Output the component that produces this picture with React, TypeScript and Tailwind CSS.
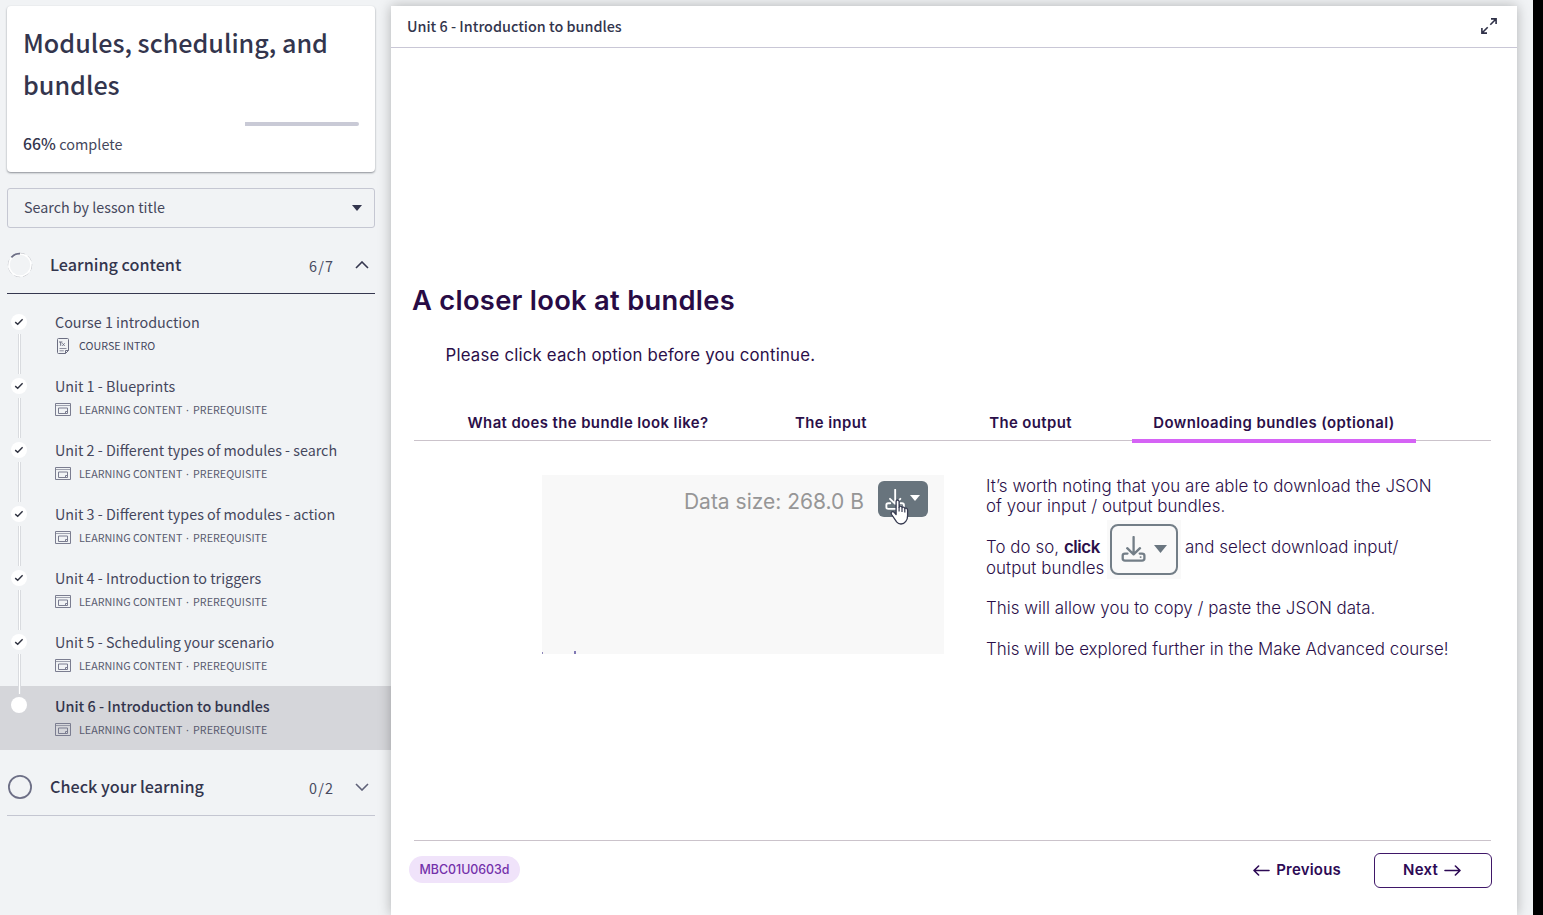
import React from "react";

const lessons = [
  { title: "Course 1 introduction", kind: "intro" },
  { title: "Unit 1 - Blueprints", kind: "unit" },
  { title: "Unit 2 - Different types of modules - search", kind: "unit" },
  { title: "Unit 3 - Different types of modules - action", kind: "unit" },
  { title: "Unit 4 - Introduction to triggers", kind: "unit" },
  { title: "Unit 5 - Scheduling your scenario", kind: "unit" },
  { title: "Unit 6 - Introduction to bundles", kind: "unit", active: true },
];

function Check() {
  return (
    <svg width="16" height="16" viewBox="0 0 16 16" fill="none" className="block">
      <path d="M4.2 8.1 L6.7 10.2 L11.6 5.2" stroke="#2f3240" strokeWidth="1.4" />
    </svg>
  );
}

function WindowIcon() {
  return (
    <svg width="16" height="14" viewBox="0 0 16 14" fill="none" stroke="#7b7d90" className="mb-[2px] block">
      <path d="M0.5 1.5H15.5V13.5H0.5Z" />
      <path d="M0.5 3.5H15.5" strokeOpacity=".7" />
      <path d="M3.5 6H12.5V11.5H3.5Z" />
      <path d="M12.5 9.5H10.5V11.5" />
    </svg>
  );
}

function DocIcon() {
  return (
    <svg width="16" height="16" viewBox="0 0 16 16" fill="none" stroke="#6c6e82" className="block">
      <path d="M3.5 .5H12.5Q13.5 .5 13.5 1.5V12.5L10.5 15.5H3.5Q2.5 15.5 2.5 14.5V1.5Q2.5 .5 3.5 .5Z" />
      <path d="M13.5 12.5H10.5V15.5" />
      <path d="M4 4H7.4M5.7 4V7.8M7.4 5.3L9.6 7.8M9.6 5.3L7.4 7.8" />
      <path d="M4.5 10.5H11.5M4.5 12.8H8.8" strokeOpacity=".75" />
    </svg>
  );
}

function DownloadIcon({ className, width }: { className?: string; width: number }) {
  return (
    <svg width={width} height={width} viewBox="0 0 26 26" fill="none" stroke="currentColor" strokeWidth="2.3" strokeLinecap="round" strokeLinejoin="round" className={className}>
      <path d="M12.6 1V18M6.2 12.2L12.6 18.4L19 12.2" />
      <path d="M6.5 17.6H4Q1.7 17.6 1.7 19.6V22.6Q1.7 24.6 4 24.6H21Q23.4 24.6 23.4 22.6V19.6Q23.4 17.6 21 17.6H18.7" />
      <path d="M19.6 21.1h.1" strokeWidth="1.9" />
    </svg>
  );
}

function SectionHeader({ label, count, open }: { label: string; count: string; open?: boolean }) {
  return (
    <div className={open ? "flex h-[58px] items-center border-b border-[#35374f]" : "flex h-[58px] items-center border-b border-[#c4c6d1]"}>
      <svg width="26" height="26" viewBox="0 0 26 26" fill="none" className="shrink-0">
        {open ? (
          <>
            <circle cx="13" cy="13" r="11.7" stroke="#b9bbc1" strokeWidth="1" strokeDasharray="6 3" />
            <circle cx="13" cy="13" r="11" stroke="#ffffff" strokeWidth="1.5" />
            <path d="M4.4 5.4A11.4 11.4 0 0 1 13 1.7" stroke="#6d6f86" strokeWidth="1.8" />
          </>
        ) : (
          <circle cx="13" cy="13" r="11.1" stroke="#6d6f86" strokeWidth="1.8" />
        )}
      </svg>
      <span className="ml-[17px] text-[16.2px] font-medium">{label}</span>
      <span className="ml-auto pt-[2px] text-[14.4px] tracking-[1.1px] text-[#484a60]">{count}</span>
      <svg width="14" height="8" viewBox="0 0 14 8" fill="none" className="mr-[6px] ml-[21px]">
        <path d={open ? "M1 7L7 1L13 7" : "M1 1L7 7L13 1"} stroke={open ? "#35374f" : "#5f6178"} strokeWidth="1.6" />
      </svg>
    </div>
  );
}

function Lesson({ title, kind, active, last }: { title: string; kind: string; active?: boolean; last?: boolean }) {
  return (
    <li className={active ? "flex h-16 bg-[#d5d6da]" : "flex h-16"}>
      <div className="flex w-[55px] shrink-0 flex-col items-start pl-[11px]">
        <div className={active ? "mt-[11px] size-4 rounded-full bg-white" : "mt-[12px] size-4 rounded-full bg-white"}>
          {!active && <Check />}
        </div>
        {!last && <div className="relative mt-1 ml-[7px] h-10 w-[3px] shrink-0 border-x border-[#d9dbdf] bg-white" />}
      </div>
      <div className="flex flex-col pt-[10px]">
        <div className={active ? "h-5 text-[14.37px] leading-5 font-medium" : "h-5 text-[14.33px] leading-5 text-[#45475d]"}>{title}</div>
        <div className="mt-[6px] flex h-4 items-center text-[10.7px] leading-4 tracking-[0.04px] text-[#585a6f]">
          {kind === "intro" ? <DocIcon /> : <WindowIcon />}
          {kind === "intro" ? (
            <span className="ml-2 text-[#45475d]">COURSE INTRO</span>
          ) : (
            <>
              <span className="ml-2 w-[107px]">LEARNING CONTENT</span>
              <span className="w-[7px] font-['Noto_Sans']">·</span>
              <span>PREREQUISITE</span>
            </>
          )}
        </div>
      </div>
    </li>
  );
}

function Sidebar() {
  return (
    <aside className="flex w-[391px] shrink-0 flex-col pt-[6px] font-['Noto_Sans_CJK_SC',sans-serif] text-[#33354d]">
      <div className="mr-4 ml-[7px] h-[166px] rounded-[4px] bg-white px-4 pt-[15px] shadow-[0_1px_2px_rgba(40,45,55,0.5)]">
        <h1 className="text-[25.13px] leading-[42px] font-medium">Modules, scheduling, and bundles</h1>
        <div className="mt-[17px] flex h-1 justify-end">
          <div className="h-1 w-[114px] rounded-r-[2px] bg-[#c9cad6]" />
        </div>
        <div className="mt-[6px] text-[14.4px] leading-6 text-[#45475c]">
          <span className="text-[15.8px] font-medium text-[#33354d]">66%</span><span className="tracking-[0.06px]"> complete</span>
        </div>
      </div>
      <div className="mt-4 mr-4 ml-[7px] flex h-10 items-center justify-between rounded-[3px] border border-[#c5c7d2] pr-3 pl-4 text-[14.3px] text-[#45475c]">
        <span className="pb-[2px]">Search by lesson title</span>
        <svg width="10" height="6" viewBox="0 0 10 6"><path d="M0 0H10L5 6Z" fill="#33354d" /></svg>
      </div>
      <div className="mt-[8px] mr-4 ml-[7px]">
        <SectionHeader label="Learning content" count="6/7" open />
      </div>
      <ul className="mt-2">
        {lessons.map((l, i) => (
          <Lesson key={l.title} {...l} last={i === lessons.length - 1} />
        ))}
      </ul>
      <div className="mt-[8px] mr-4 ml-[7px]">
        <SectionHeader label="Check your learning" count="0/2" />
      </div>
    </aside>
  );
}

const tabs = [
  { label: "What does the bundle look like?", box: "w-[290px]" },
  { label: "The input", box: "w-[196px]" },
  { label: "The output", box: "w-[203px]" },
  { label: "Downloading bundles (optional)", box: "w-[284px]" },
];

function Recording() {
  return (
    <div className="flex h-[179px] w-[402px] shrink-0 flex-col justify-between bg-[#f8f8f8]">
      <div className="flex items-start justify-end pt-[6px] pr-4">
        <span className="mt-[6px] mr-[14px] text-[21px] leading-[30px] text-[#969696]">Data size: 268.0 B</span>
        <div className="relative flex h-9 w-[50px] rounded-[6px] bg-[#68747d] pt-[8px] pl-[7px] text-white">
          <DownloadIcon width={21} />
          <svg width="10" height="6" viewBox="0 0 10 6" className="mt-[6px] ml-[4px]"><path d="M0 0H10L5 6Z" fill="white" /></svg>
          <svg width="20" height="26" viewBox="0 0 20 26" className="absolute top-[18px] left-[12px]">
            <path
              d="M6.1 2.8Q6.1 1 7.6 1T9.1 2.8V8.2Q9.4 7.2 10.6 7.2T12 8.7Q12.4 8 13.4 8.1T14.8 9.6Q15.3 9 16.3 9.2T17.6 11V16.5Q17.6 20.5 15.8 22.4Q14 25 11 25Q8.3 25 6.6 22.8L1.6 15.5Q.6 13.8 1.7 13T4.2 13.3L6.1 15.5Z"
              fill="white" stroke="#363a50" strokeWidth="1.3" strokeLinejoin="round"
            />
            <path d="M9.1 8V12.5M12 9V13M14.8 10V13.4" stroke="#363a50" strokeWidth="1.2" />
          </svg>
        </div>
      </div>
      <div className="flex h-[3px] items-end">
        <div className="h-[2px] w-px bg-[#8d86b8]" />
        <div className="ml-[31px] h-[3px] w-[2px] bg-[#8078b4]" />
      </div>
    </div>
  );
}

function Arrow({ back }: { back?: boolean }) {
  return (
    <svg width="17" height="11" viewBox="0 0 17 11" fill="none" stroke="#2d0a55" strokeWidth="1.6" strokeLinecap="round" strokeLinejoin="round">
      <path d={back ? "M16 5.5H1M5.6 1L1 5.5L5.6 10" : "M1 5.5H16M11.4 1L16 5.5L11.4 10"} />
    </svg>
  );
}

function Slide() {
  return (
    <section className="flex flex-1 flex-col font-[Inter,sans-serif] text-[#2b0f49]">
      <h2 className="mt-[233px] ml-[21px] text-[27.3px] leading-[40px] font-semibold tracking-[0.29px] text-[#280b45]">A closer look at bundles</h2>
      <p className="mt-[24px] ml-[54.5px] text-[16.8px] leading-5 tracking-[0.2px]">Please click each option before you continue.</p>
      <nav className="mt-[37px] mr-[26px] ml-[23px] flex h-[39px] border-b border-[#cbc3cb] pl-[29px]">
        {tabs.map((t, i) => (
          <div key={t.label} className={`flex h-[41px] shrink-0 justify-center pt-[11px] text-[14.9px] leading-[20px] font-semibold tracking-[0.41px] whitespace-nowrap ${t.box} ${i === 3 ? "border-b-4 border-[#d563f5]" : ""}`}>
            {t.label}
          </div>
        ))}
      </nav>
      <div className="mt-[34px] flex pl-[151px]">
        <Recording />
        <div className="ml-[42px] pt-[1px] text-[16.9px] leading-[20.4px] font-light whitespace-nowrap">
          <p className="tracking-[0.07px]">It’s worth noting that you are able to download the JSON<br />of your input / output bundles.</p>
          <div className="mt-[3px] flex h-[60px]">
            <p className="w-[121px] shrink-0 pt-[17px] leading-[20.8px] tracking-[0.05px]">To do so, <b className="font-semibold tracking-[-0.4px]">click</b><br />output bundles</p>
            <div className="flex h-[59px] w-[74px] shrink-0 items-center justify-center bg-[#f9f9f9]">
              <div className="flex h-[51px] w-[68px] rounded-[8px] border-2 border-[#737e87] pt-[10px] pl-[9px] text-[#737e87]">
                <DownloadIcon width={26} />
                <svg width="13" height="8" viewBox="0 0 13 8" className="mt-[9px] ml-[7px]"><path d="M0 0H13L6.5 8Z" fill="#6a7680" /></svg>
              </div>
            </div>
            <p className="ml-[4px] pt-[17px] tracking-[0.04px]">and select download input/</p>
          </div>
          <p className="mt-[18px] tracking-[0.03px]">This will allow you to copy / paste the JSON data.</p>
          <p className="mt-[21px]">This will be explored further in the Make Advanced course!</p>
        </div>
      </div>
      <footer className="mt-auto mr-[25px] mb-[27px] ml-[18px] flex h-[48px] flex-col">
        <div className="mr-px ml-[5px] h-px shrink-0 bg-[#cbc3cb]" />
        <div className="mt-3 flex h-[35px] items-start">
          <span className="mt-[3px] flex h-[27px] w-[111px] items-center justify-center rounded-full bg-[#f0e3fa] pt-px text-[12.4px] font-medium text-[#7431aa]">MBC01U0603d</span>
          <button className="ml-auto flex h-[34px] items-center gap-[6px] text-[15px] font-semibold tracking-[0.2px] text-[#2d0a55]"><Arrow back />Previous</button>
          <button className="ml-[33px] flex h-[35px] w-[118px] items-center justify-center gap-[6px] rounded-[6px] border border-[#3f1768] pr-[2px] text-[15px] font-semibold tracking-[0.2px] text-[#2d0a55]">Next<Arrow /></button>
        </div>
      </footer>
    </section>
  );
}

export default function App() {
  return (
    <div className="flex h-[915px] w-[1543px] overflow-hidden bg-[#f1f3f5]">
      <Sidebar />
      <main className="relative mt-[6px] flex w-[1126px] shrink-0 flex-col bg-white shadow-[0_0_12px_rgba(0,0,0,0.27)]">
        <header className="flex h-[42px] shrink-0 items-center justify-between border-b border-[#c9c7d6] pr-5 pb-[2px] pl-4 font-['Noto_Sans_CJK_SC',sans-serif] text-[#33354d]">
          <span className="text-[14.37px] font-medium">Unit 6 - Introduction to bundles</span>
          <svg width="16" height="16" viewBox="0 0 16 16" fill="none" stroke="#2f3148" strokeWidth="1.6">
            <path d="M9.3 6.7L15 1M10 .9H15.1V6M6.7 9.3L1 15M.9 10V15.1H6" />
          </svg>
        </header>
        <Slide />
      </main>
      <div className="relative ml-4 w-[10px] shrink-0 bg-black" />
    </div>
  );
}
